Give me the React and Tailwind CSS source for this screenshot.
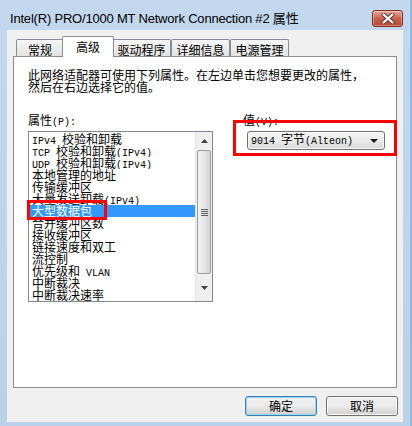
import React from 'react';

const cjk = "font-['Noto_Sans_CJK_SC',sans-serif]";

const properties = [
  'IPv4 校验和卸载',
  'TCP 校验和卸载(IPv4)',
  'UDP 校验和卸载(IPv4)',
  '本地管理的地址',
  '传输缓冲区',
  '大量发送卸载(IPv4)',
  '大型数据包',
  '合并缓冲区数',
  '接收缓冲区',
  '链接速度和双工',
  '流控制',
  '优先级和 VLAN',
  '中断裁决',
  '中断裁决速率',
];

// SimSun-style text: ascii runs are half width mono, the rest is CJK
const Mixed = ({ text }) => {
  const parts = text.split(/([\x20-\x7e]+)/).filter(Boolean);
  return parts.map((p, i) =>
    /^[\x20-\x7e]+$/.test(p) ? (
      <span key={i} className="font-['Liberation_Mono',monospace] text-[10px] whitespace-pre">{p}</span>
    ) : (
      <span key={i}>{p}</span>
    )
  );
};

const Tab = ({ label, width, active }) =>
  active ? (
    <div
      className={`relative z-10 -mx-[2px] h-[21px] ${width} border border-b-0 border-[#898c95] rounded-t-[2px] bg-white text-[12px] leading-[14px] pt-[3px] text-center text-black`}
    >
      {label}
    </div>
  ) : (
    <div
      className={`h-[18px] ${width} border border-b-0 border-[#898c95] rounded-t-[2px] bg-gradient-to-b from-[#f6f6f6] to-[#e2e2e2] text-[12px] leading-[14px] pt-[3px] text-center text-black`}
    >
      {label}
    </div>
  );

const CloseButton = () => (
  <div className="w-[31px] h-[17px] rounded-[3px] border border-[#7a2f22] bg-gradient-to-b from-[#e8a89a] via-[#c9604c] to-[#c0442d] flex items-center justify-center shadow-[inset_0_0_0_1px_rgba(255,255,255,0.35)]">
    <svg width="14" height="11" viewBox="0 0 14 11">
      <path d="M2.5 1.5 L11.5 9.5 M11.5 1.5 L2.5 9.5" stroke="#5a3a34" strokeWidth="4" strokeLinecap="round" />
      <path d="M2.5 1.5 L11.5 9.5 M11.5 1.5 L2.5 9.5" stroke="#ffffff" strokeWidth="2.2" strokeLinecap="round" />
    </svg>
  </div>
);

const Scrollbar = () => (
  <div className="w-[17px] h-full bg-[#f0f0f0] border-l border-[#e6e6e6] flex flex-col">
    <div className="h-[18px] flex items-center justify-center">
      <svg width="7" height="4" viewBox="0 0 7 4">
        <path d="M0 4 L3.5 0 L7 4 Z" fill="#404040" />
      </svg>
    </div>
    <div className="mx-[1px] h-[124px] rounded-[2px] border border-[#9b9b9b] bg-gradient-to-r from-[#f2f2f2] via-[#e6e6e6] to-[#d4d4d4] flex items-center justify-center">
      <div className="flex flex-col gap-[1px]">
        <div className="w-[7px] h-px bg-[#606060]" />
        <div className="w-[7px] h-px bg-[#606060]" />
        <div className="w-[7px] h-px bg-[#606060]" />
        <div className="w-[7px] h-px bg-[#606060]" />
      </div>
    </div>
    <div className="flex-1 flex items-center justify-center">
      <svg width="7" height="4" viewBox="0 0 7 4">
        <path d="M0 0 L7 0 L3.5 4 Z" fill="#404040" />
      </svg>
    </div>
  </div>
);

const Button = ({ label, primary }) => (
  <div
    className={`w-[72px] h-[20px] rounded-[3px] border ${
      primary ? 'border-[#3c7fb1] shadow-[inset_0_0_0_1px_#8fd5f5]' : 'border-[#707070] shadow-[inset_0_0_0_1px_#fbfbfb]'
    } bg-gradient-to-b from-[#f2f2f2] via-[#ebebeb] to-[#cfcfcf] flex items-center justify-center text-[12px] text-black`}
  >
    {label}
  </div>
);

export default function App() {
  return (
    <div className={`relative w-[412px] h-[426px] bg-gradient-to-b from-[#c3d8ee] to-[#bad1ea] border-r-2 border-[#8dbde6] flex flex-col ${cjk}`}>
      {/* Title bar */}
      <div className="h-[30px] pt-[6px] flex items-center justify-between pl-[10px] pr-[7px]">
        <span className="font-['Liberation_Sans','Noto_Sans_CJK_SC',sans-serif] text-[13px] tracking-[-0.2px] text-black leading-none">
          Intel(R) PRO/1000 MT Network Connection #2 属性
        </span>
        <CloseButton />
      </div>

      {/* Client area */}
      <div className="flex-1 mx-[7px] mb-[4px] bg-[#f0f0f0] flex flex-col px-[6px] pt-[6px]">
        {/* Tabs */}
        <div className="h-[21px] flex items-end pl-[3px]">
          <Tab label="常规" width="w-[48px]" />
          <Tab label="高级" width="w-[52px]" active />
          <Tab label="驱动程序" width="w-[59px]" />
          <Tab label="详细信息" width="w-[59px]" />
          <Tab label="电源管理" width="w-[59px]" />
        </div>

        {/* Tab page */}
        <div className="-mt-px h-[332px] border border-[#898c95] bg-white pl-[14px] pt-[12px] text-[12px] leading-[12px] text-black">
          <p className="leading-[12px]">此网络适配器可使用下列属性。在左边单击您想要更改的属性，</p>
          <p className="leading-[12px]">然后在右边选择它的值。</p>

          <div className="mt-[21px] flex">
            {/* Properties */}
            <div className="w-[185px] flex flex-col">
              <div className="h-[12px] leading-[12px]">
                <Mixed text="属性(P):" />
              </div>
              <div className="mt-[5px] h-[171px] border border-[#828790] flex overflow-hidden">
                <div className="flex-1 pl-px pt-px overflow-hidden">
                  {properties.map((p, i) => (
                    <div
                      key={p}
                      className={`h-[12px] leading-[12px] pl-[2px] whitespace-nowrap overflow-hidden ${
                        i === 6 ? 'bg-[#3399ff] text-white' : 'text-black'
                      }`}
                    >
                      <Mixed text={p} />
                    </div>
                  ))}
                </div>
                <Scrollbar />
              </div>
            </div>

            {/* Value */}
            <div className="ml-[30px] flex flex-col">
              <div className="h-[12px] leading-[12px]">
                <Mixed text="值(V):" />
              </div>
              <div className="mt-[5px] ml-[4px] w-[138px] h-[19px] rounded-[3px] border border-[#707070] bg-gradient-to-b from-[#f4f4f4] via-[#ebebeb] to-[#d8d8d8] shadow-[inset_0_0_0_1px_#fcfcfc] flex items-center justify-between pl-[3px] pr-[6px]">
                <span className="leading-[12px]">
                  <Mixed text="9014 字节(Alteon)" />
                </span>
                <svg width="8" height="4" viewBox="0 0 8 4">
                  <path d="M0 0 L8 0 L4 4 Z" fill="#1a1a1a" />
                </svg>
              </div>
            </div>
          </div>
        </div>

        {/* Buttons */}
        <div className="mt-[8px] flex justify-end gap-[9px] -mr-[1px]">
          <Button label="确定" primary />
          <Button label="取消" />
        </div>
      </div>

      {/* Annotation boxes */}
      <div className="absolute left-[27px] top-[200px] w-[80px] h-[20px] border-[3px] border-[#ff0000]" />
      <div className="absolute left-[233px] top-[120px] w-[164px] h-[36px] border-[3px] border-[#ff0000]" />
    </div>
  );
}
